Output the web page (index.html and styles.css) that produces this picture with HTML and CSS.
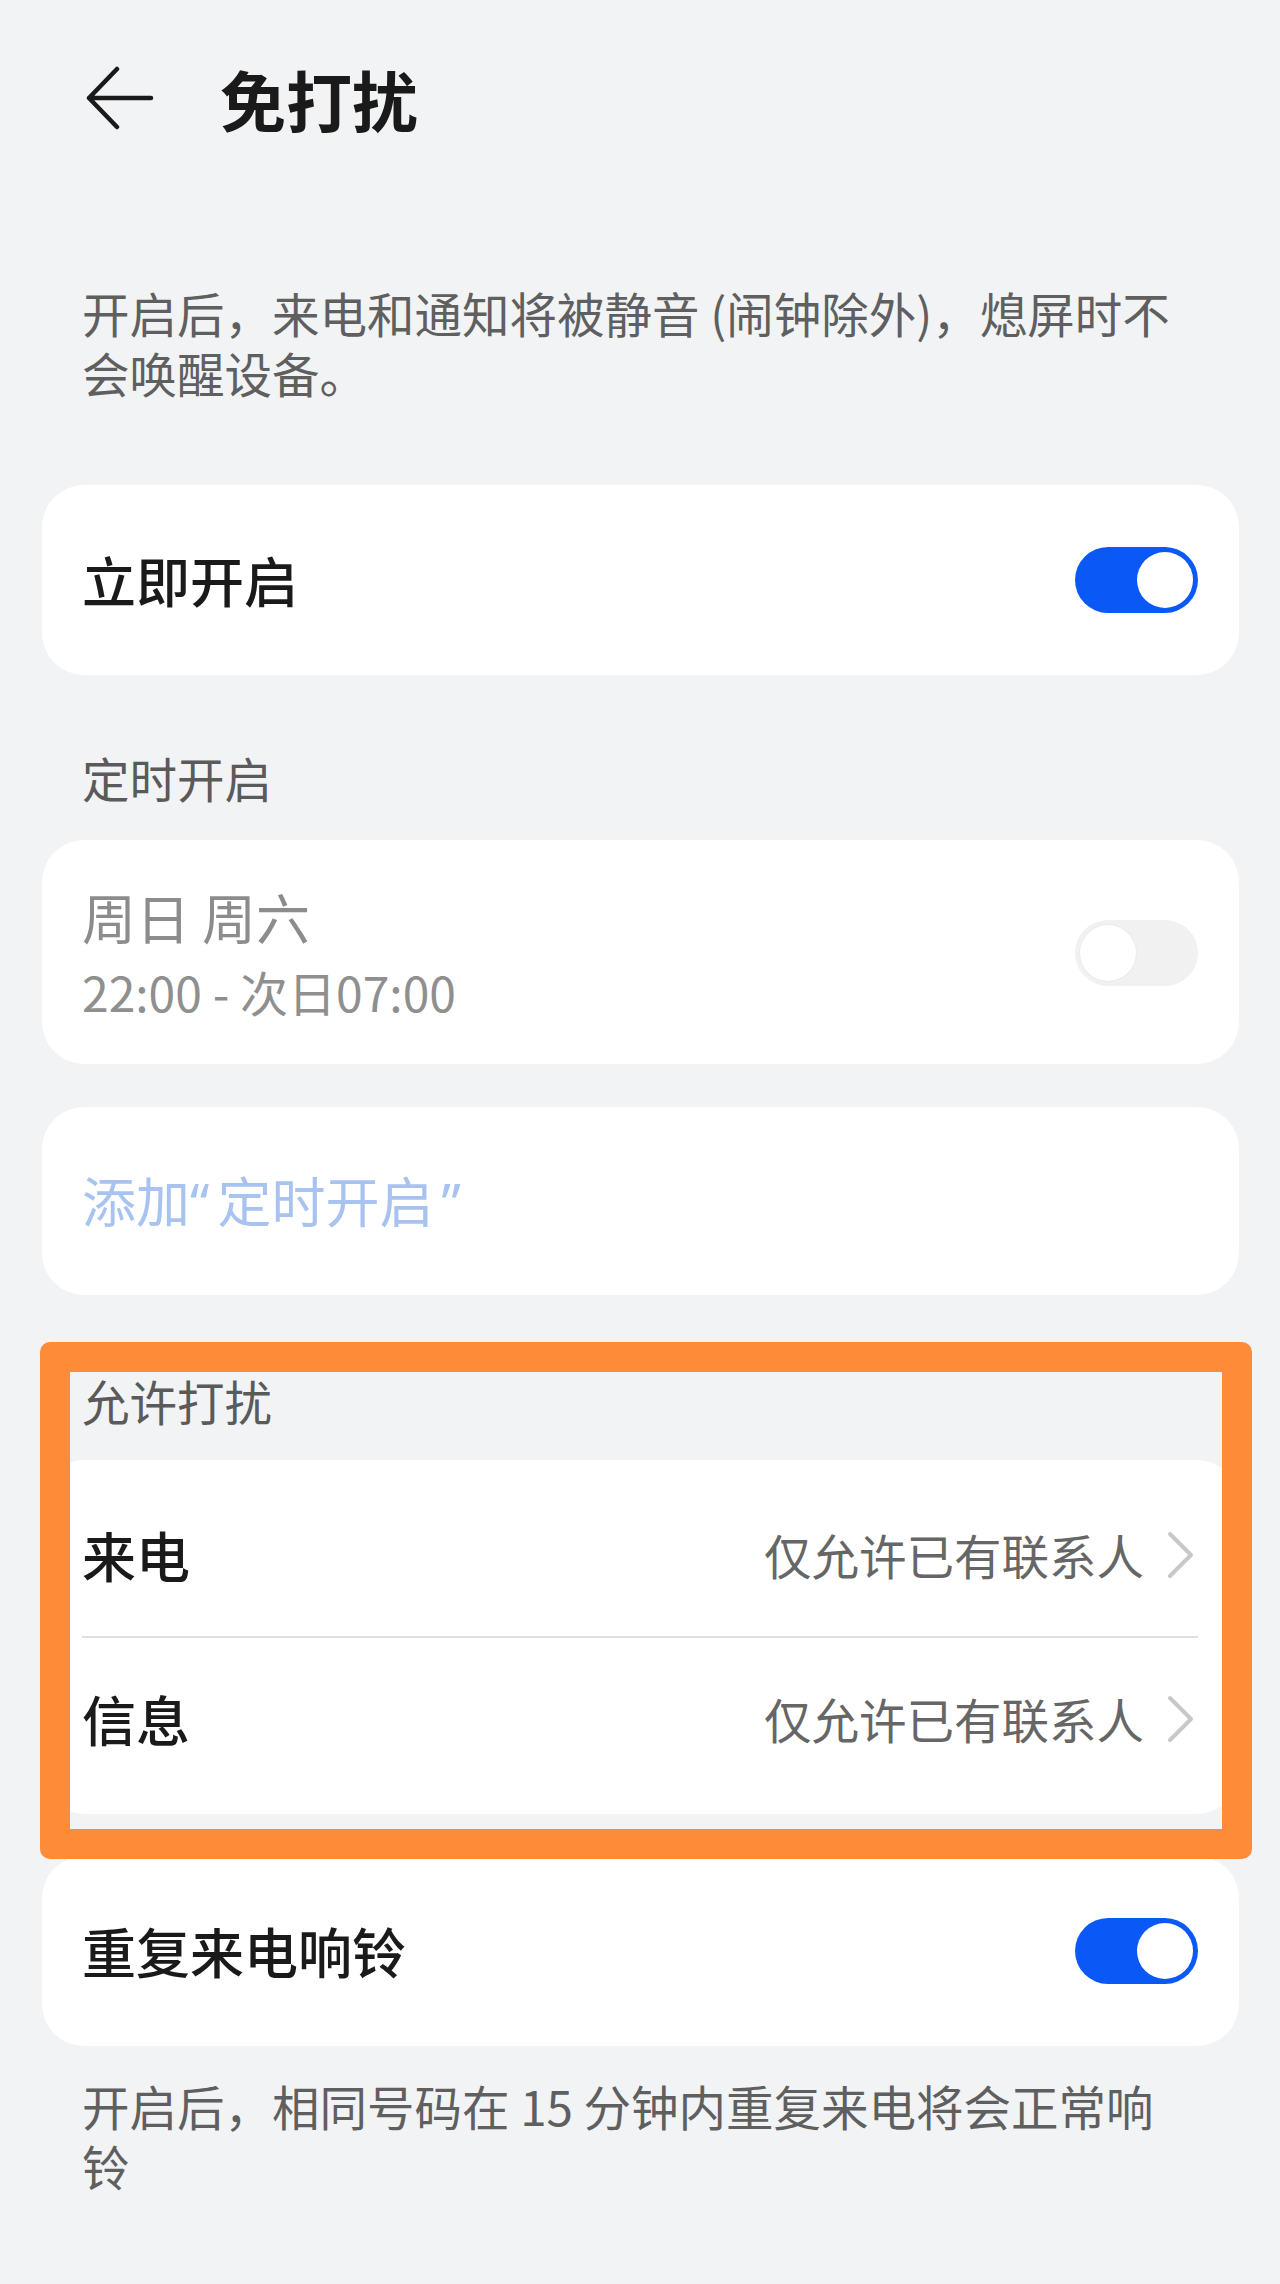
FILE: index.html
```html
<!DOCTYPE html>
<html lang="zh-CN">
<head>
<meta charset="utf-8">
<title>免打扰</title>
<link rel="stylesheet" href="styles.css">
</head>
<body>
<div class="page">
  <header class="topbar">
    <svg class="back" width="68" height="64" viewBox="0 0 68 64" aria-hidden="true">
      <path d="M31 3 L3 32 L31 61 M3 32 H65" fill="none" stroke="#1a1a1a" stroke-width="4.5" stroke-linecap="round" stroke-linejoin="round"/>
    </svg>
    <h1 class="title">免打扰</h1>
  </header>

  <p class="desc">开启后，来电和通知将被静音 (闹钟除外)，熄屏时不<br>会唤醒设备。</p>

  <div class="card row-card first-card">
    <span class="item-title">立即开启</span>
    <span class="switch on"><span class="knob"></span></span>
  </div>

  <div class="section-label label-schedule">定时开启</div>

  <div class="card schedule-card">
    <div class="schedule-text">
      <div class="item-title muted">周日 周六</div>
      <div class="item-sub">22:00 - 次日07:00</div>
    </div>
    <span class="switch off"><span class="knob"></span></span>
  </div>

  <div class="card add-card">
    <span class="item-title link">添加<span class="quote open">“</span>定时开启<span class="quote close">”</span></span>
  </div>

  <section class="highlight-section">
    <div class="section-label">允许打扰</div>
    <div class="card list-card">
      <div class="list-row">
        <span class="item-title">来电</span>
        <span class="row-right">
          <span class="value">仅允许已有联系人</span>
          <svg class="chevron" width="32" height="48" viewBox="0 0 32 48" aria-hidden="true">
            <path d="M4 3 L25 24 L4 45" fill="none" stroke="#c8c8c8" stroke-width="4" stroke-linecap="round" stroke-linejoin="round"/>
          </svg>
        </span>
      </div>
      <div class="divider"></div>
      <div class="list-row">
        <span class="item-title">信息</span>
        <span class="row-right">
          <span class="value">仅允许已有联系人</span>
          <svg class="chevron" width="32" height="48" viewBox="0 0 32 48" aria-hidden="true">
            <path d="M4 3 L25 24 L4 45" fill="none" stroke="#c8c8c8" stroke-width="4" stroke-linecap="round" stroke-linejoin="round"/>
          </svg>
        </span>
      </div>
    </div>
    <div class="highlight"></div>
  </section>

  <div class="card row-card repeat-card">
    <span class="item-title">重复来电响铃</span>
    <span class="switch on"><span class="knob"></span></span>
  </div>

  <p class="desc footer-desc">开启后，相同号码在 15 分钟内重复来电将会正常响<br>铃</p>
</div>
</body>
</html>
```

FILE: styles.css
```css
* {
  box-sizing: border-box;
}

html,
body {
  margin: 0;
  padding: 0;
  background: #f1f3f5;
}

body {
  font-family: "Noto Sans CJK SC", "Noto Sans", sans-serif;
  color: #1a1a1a;
  min-height: 2284px;
}

.page {
  width: 1280px;
  padding: 0 41px 0 42px;
}

.topbar {
  height: 196px;
  display: flex;
  align-items: center;
  padding-left: 44px;
}

.back {
  display: block;
  flex: none;
}

.title {
  margin: 0 0 0 66px;
  font-size: 66px;
  line-height: 1;
  font-weight: 700;
  color: #1a1a1a;
}

.desc {
  margin: 87px 0 0;
  padding: 0 40px;
  font-size: 47.5px;
  line-height: 60px;
  color: #5f5f5f;
}

.card {
  background: #ffffff;
  border-radius: 42px;
}

.row-card {
  height: 190px;
  display: flex;
  align-items: center;
  justify-content: space-between;
  padding: 0 41px 0 40px;
}

.first-card {
  margin-top: 82px;
}

.item-title {
  font-size: 54px;
  line-height: 64px;
  font-weight: 500;
  color: #1a1a1a;
}

.item-title.muted {
  color: #8c8c8c;
  font-weight: 400;
}

.item-title.link {
  color: #a8c3ef;
  font-weight: 400;
}

.quote {
  font-family: "Noto Sans", sans-serif;
}

.quote.open {
  margin-right: 8px;
}

.quote.close {
  margin-left: 8px;
}

.item-sub {
  margin-top: 12px;
  font-size: 48px;
  line-height: 60px;
  color: #8f8f8f;
}

.section-label {
  padding: 0 40px;
  font-size: 47.5px;
  line-height: 58px;
  color: #5a5a5a;
}

.label-schedule {
  margin-top: 74px;
}

.schedule-card {
  margin-top: 33px;
  height: 224px;
  display: flex;
  align-items: center;
  justify-content: space-between;
  padding: 45px 41px 43px 40px;
}

.add-card {
  margin-top: 43px;
  height: 188px;
  display: flex;
  align-items: center;
  padding: 0 40px;
}

.switch {
  flex: none;
  width: 123px;
  height: 66px;
  border-radius: 33px;
  padding: 5px;
  display: flex;
}

.switch.on {
  background: #0a59f7;
  justify-content: flex-end;
}

.switch.off {
  background: #f1f1f1;
  justify-content: flex-start;
}

.knob {
  width: 56px;
  height: 56px;
  border-radius: 50%;
  background: #ffffff;
}

.switch.off .knob {
  box-shadow: 0 0 0 1px #ebebeb;
}

.highlight-section {
  position: relative;
  margin-top: 77px;
}

.list-card {
  margin-top: 30px;
  padding: 13px 0;
}

.list-row {
  height: 163px;
  display: flex;
  align-items: center;
  justify-content: space-between;
  padding: 0 41px 0 40px;
}

.row-right {
  display: flex;
  align-items: center;
}

.value {
  font-size: 47.5px;
  line-height: 58px;
  color: #666666;
}

.chevron {
  display: block;
  margin-left: 22px;
}

.divider {
  height: 1.5px;
  margin: 0 41px 0 40px;
  background: #e0e0e0;
}

.highlight {
  position: absolute;
  top: -30px;
  left: -2px;
  right: -13px;
  bottom: -45px;
  border: 30px solid #fd8b37;
  border-radius: 10px;
  pointer-events: none;
}

.repeat-card {
  margin-top: 42px;
}

.footer-desc {
  margin-top: 30px;
}
```
